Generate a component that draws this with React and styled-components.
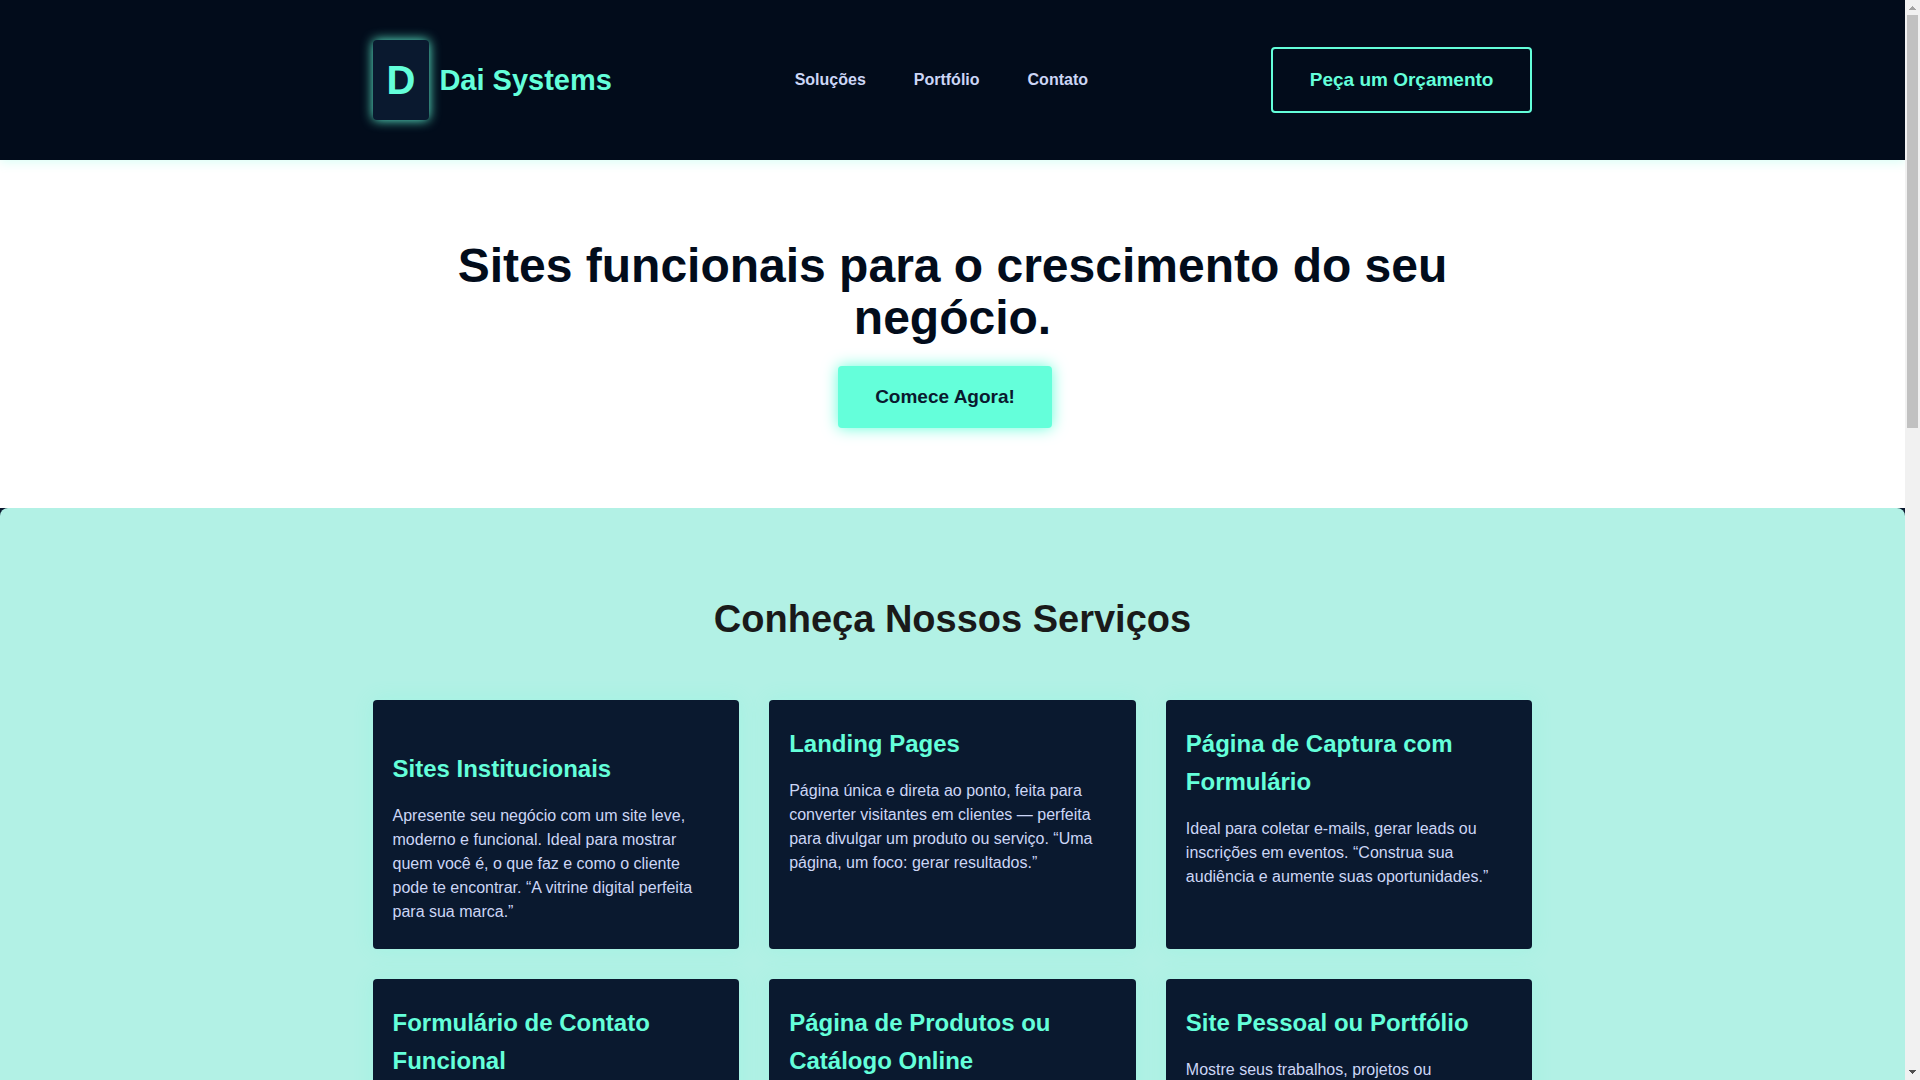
import styled, { createGlobalStyle, ThemeProvider } from "styled-components";

const theme = {
  dark: "#020c1b",
  navy: "#0a192f",
  accent: "#64ffda",
  text: "#ccd6f6",
  mint: "#b2f1e5",
  title: "#1a1a1a",
};

const navLinks = [
  { name: "Soluções", path: "#solucoes" },
  { name: "Portfólio", path: "#portfolio" },
  { name: "Contato", path: "#contato" },
];

const services = [
  {
    title: "Sites Institucionais",
    text: "Apresente seu negócio com um site leve, moderno e funcional. Ideal para mostrar quem você é, o que faz e como o cliente pode te encontrar. “A vitrine digital perfeita para sua marca.”",
    hasIcon: true,
  },
  {
    title: "Landing Pages",
    text: "Página única e direta ao ponto, feita para converter visitantes em clientes — perfeita para divulgar um produto ou serviço. “Uma página, um foco: gerar resultados.”",
  },
  {
    title: "Página de Captura com Formulário",
    text: "Ideal para coletar e-mails, gerar leads ou inscrições em eventos. “Construa sua audiência e aumente suas oportunidades.”",
  },
  { title: "Formulário de Contato Funcional" },
  { title: "Página de Produtos ou Catálogo Online" },
  {
    title: "Site Pessoal ou Portfólio",
    text: "Mostre seus trabalhos, projetos ou",
  },
];

const GlobalStyle = createGlobalStyle`
  * {
    margin: 0;
    padding: 0;
    box-sizing: border-box;
  }

  body {
    font-family: "Liberation Sans", Arial, sans-serif;
    font-size: 16px;
    line-height: 26px;
    background-color: ${theme.navy};
    color: ${theme.text};
  }
`;

const Layout = styled.div`
  display: grid;
  grid-template-columns: 1fr 15px;
  height: 100vh;
`;

const Page = styled.div`
  min-width: 0;
  overflow-y: auto;
  scrollbar-width: none;
`;

const Container = styled.div`
  max-width: 1200px;
  margin: 0 auto;
  padding: 0 20px;
`;

const Header = styled.header`
  position: relative;
  z-index: 1;
  padding: 40px 0;
  background-color: ${({ theme }) => theme.dark};
  box-shadow: 0 2px 10px rgba(100, 255, 218, 0.25);
`;

const HeaderRow = styled(Container)`
  display: flex;
  justify-content: space-between;
  align-items: center;
`;

const Brand = styled.a`
  display: flex;
  align-items: center;
  gap: 10px;
  color: ${({ theme }) => theme.accent};
  font-size: 29px;
  font-weight: 700;
  text-decoration: none;
`;

const BrandMark = styled.span`
  padding: 8px 14px;
  border-radius: 4px;
  background-color: ${({ theme }) => theme.navy};
  box-shadow: 0 0 12px ${({ theme }) => theme.accent};
  font-size: 40px;
  line-height: 64px;
`;

const Nav = styled.nav`
  display: flex;
  gap: 48px;
`;

const NavLink = styled.a`
  color: ${({ theme }) => theme.text};
  font-weight: 700;
  text-decoration: none;

  &:hover {
    color: ${({ theme }) => theme.accent};
  }
`;

const Button = styled.button`
  padding: 16px 37px;
  border: ${({ $outlined, theme }) =>
    $outlined ? `2px solid ${theme.accent}` : "none"};
  border-radius: 4px;
  background-color: ${({ $outlined, theme }) =>
    $outlined ? "transparent" : theme.accent};
  box-shadow: ${({ $outlined, theme }) =>
    $outlined ? "none" : `0 0 15px ${theme.accent}`};
  color: ${({ $outlined, theme }) => ($outlined ? theme.accent : theme.navy)};
  font-family: inherit;
  font-size: 19px;
  font-weight: 700;
  line-height: 30px;
  cursor: pointer;
`;

const Hero = styled.section`
  padding: 80px 0;
  background-color: #ffffff;
  text-align: center;
`;

const HeroTitle = styled.h1`
  margin-bottom: 22px;
  color: ${({ theme }) => theme.dark};
  font-size: 48px;
  line-height: 52px;
`;

const HeroActions = styled.div`
  display: flex;
  justify-content: center;

  & > button {
    margin-right: 15px;
  }
`;

const Services = styled.section`
  padding: 80px 0;
  border-radius: 8px;
  background-color: ${({ theme }) => theme.mint};
`;

const ServicesTitle = styled.h2`
  margin-bottom: 50px;
  color: ${({ theme }) => theme.title};
  font-size: 38px;
  line-height: 62px;
  text-align: center;
`;

const Grid = styled.div`
  display: grid;
  grid-template-columns: repeat(3, 1fr);
  gap: 30px;
`;

const Card = styled.article`
  padding: 25px 20px;
  border-radius: 4px;
  background-color: ${({ theme }) => theme.navy};
  box-shadow: 0 0 20px rgba(100, 255, 218, 0.2);
`;

const CardIcon = styled.div`
  height: 25px;
`;

const CardTitle = styled.h3`
  color: ${({ theme }) => theme.accent};
  font-size: 24px;
  line-height: 38px;
`;

const CardText = styled.p`
  margin-top: 16px;
  line-height: 24px;
`;

const Scrollbar = styled.div`
  display: flex;
  flex-direction: column;
  align-items: center;
  justify-content: space-between;
  background-color: #f1f1f1;
`;

const ScrollTop = styled.div`
  display: flex;
  flex-direction: column;
  align-items: center;
  width: 11px;
  height: 39.6%;
`;

const ScrollArrow = styled.svg`
  flex: none;
  width: 11px;
  height: 15px;
  fill: ${({ $disabled }) => ($disabled ? "#a3a3a3" : "#505050")};
`;

const ScrollThumb = styled.div`
  width: 11px;
  flex: 1;
  background-color: #c1c1c1;
`;

export default function App() {
  return (
    <ThemeProvider theme={theme}>
      <GlobalStyle />
      <Layout>
        <Page>
          <Header>
            <HeaderRow>
              <Brand href="#">
                <BrandMark>D</BrandMark>
                Dai Systems
              </Brand>
              <Nav>
                {navLinks.map(({ name, path }) => (
                  <NavLink key={path} href={path}>
                    {name}
                  </NavLink>
                ))}
              </Nav>
              <Button $outlined>Peça um Orçamento</Button>
            </HeaderRow>
          </Header>
          <main>
            <Hero>
              <Container>
                <HeroTitle>
                  Sites funcionais para o crescimento do seu negócio.
                </HeroTitle>
                <HeroActions>
                  <Button>Comece Agora!</Button>
                </HeroActions>
              </Container>
            </Hero>
            <Services id="solucoes">
              <Container>
                <ServicesTitle>Conheça Nossos Serviços</ServicesTitle>
                <Grid>
                  {services.map(({ title, text, hasIcon }) => (
                    <Card key={title}>
                      {hasIcon && <CardIcon />}
                      <CardTitle>{title}</CardTitle>
                      {text && <CardText>{text}</CardText>}
                    </Card>
                  ))}
                </Grid>
              </Container>
            </Services>
          </main>
        </Page>
        <Scrollbar aria-hidden="true">
          <ScrollTop>
            <ScrollArrow $disabled viewBox="0 0 11 15">
              <path d="M5 6h1v1h1v1h1v1h1v1H2V9h1V8h1V7h1z" />
            </ScrollArrow>
            <ScrollThumb />
          </ScrollTop>
          <ScrollArrow viewBox="0 0 11 15">
            <path d="M2 5h7v1H8v1H7v1H6v1H5V8H4V7H3V6H2z" />
          </ScrollArrow>
        </Scrollbar>
      </Layout>
    </ThemeProvider>
  );
}
